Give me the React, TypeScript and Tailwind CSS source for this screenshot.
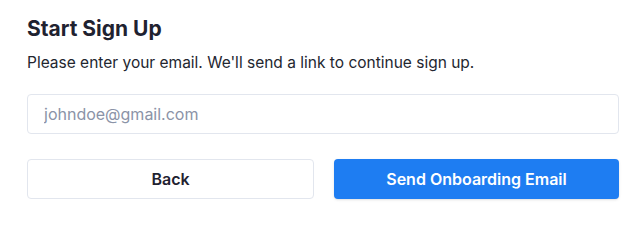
export default function App() {
  return (
    <div
      className="w-[644px] h-[224px] bg-white pl-[27px] pr-[25px] pt-[15px]"
      style={{ fontFamily: "Inter, 'Noto Sans', sans-serif" }}
    >
      <h1 className="text-[21px] leading-[28px] font-bold text-[#1f2230]">
        Start Sign Up
      </h1>
      <p className="mt-[9px] text-[15.5px] leading-[22px] text-[#23262f]">
        Please enter your email. We'll send a link to continue sign up.
      </p>
      <input
        type="email"
        placeholder="johndoe@gmail.com"
        className="mt-[20px] block w-full h-[40px] rounded-[4px] border border-[#e2e6ee] px-4 text-[16px] text-[#23262f] placeholder:text-[#8b93a7] outline-none"
      />
      <div className="mt-[25px] flex gap-5">
        <button className="flex-1 h-[40px] rounded-[4px] border border-[#e2e6ee] bg-white text-[16px] font-semibold text-[#1f2230]">
          Back
        </button>
        <button className="flex-1 h-[40px] rounded-[4px] bg-[#1e7df2] text-[16px] font-semibold text-white shadow-sm">
          Send Onboarding Email
        </button>
      </div>
    </div>
  );
}
